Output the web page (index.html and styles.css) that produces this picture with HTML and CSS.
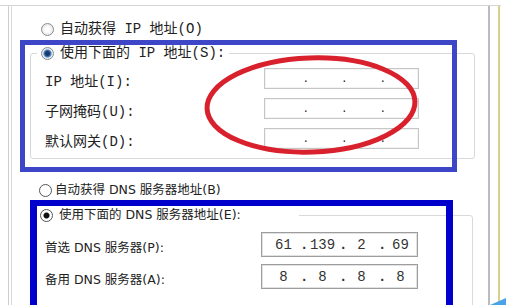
FILE: index.html
```html
<!DOCTYPE html>
<html lang="zh-CN">
<head>
    <meta charset="UTF-8">
    <title>Internet 协议版本 4 属性</title>
    <link rel="stylesheet" href="styles.css">
</head>
<body>
    <div class="shot">
        <div class="frame">
            <div class="dialog">
                <div class="xp">
                    <div class="opt opt-auto"><span class="radio"></span>自动获得 IP 地址(O)</div>
                    <fieldset class="group group-ip">
                        <legend class="opt"><span class="radio radio-xp"></span>使用下面的 IP 地址(S):</legend>
                        <div class="row">
                            <span class="lbl">IP 地址(I):</span>
                            <span class="ip"><span class="seg"></span><span class="dot">.</span><span class="seg"></span><span class="dot">.</span><span class="seg"></span><span class="dot">.</span><span class="seg"></span></span>
                        </div>
                        <div class="row">
                            <span class="lbl">子网掩码(U):</span>
                            <span class="ip"><span class="seg"></span><span class="dot">.</span><span class="seg"></span><span class="dot">.</span><span class="seg"></span><span class="dot">.</span><span class="seg"></span></span>
                        </div>
                        <div class="row">
                            <span class="lbl">默认网关(D):</span>
                            <span class="ip"><span class="seg"></span><span class="dot">.</span><span class="seg"></span><span class="dot">.</span><span class="seg"></span><span class="dot">.</span><span class="seg"></span></span>
                        </div>
                    </fieldset>
                </div>

                <div class="win7">
                    <div class="opt opt-dns"><span class="radio radio-flat"></span>自动获得 DNS 服务器地址(B)</div>
                    <fieldset class="group group-dns">
                        <legend class="opt"><span class="radio radio-flat radio-on"></span>使用下面的 DNS 服务器地址(E):</legend>
                        <div class="row">
                            <span class="lbl">首选 DNS 服务器(P):</span>
                            <span class="ip"><span class="seg">61</span><span class="dot">.</span><span class="seg">139</span><span class="dot">.</span><span class="seg">2</span><span class="dot">.</span><span class="seg">69</span></span>
                        </div>
                        <div class="row">
                            <span class="lbl">备用 DNS 服务器(A):</span>
                            <span class="ip"><span class="seg">8</span><span class="dot">.</span><span class="seg">8</span><span class="dot">.</span><span class="seg">8</span><span class="dot">.</span><span class="seg">8</span></span>
                        </div>
                    </fieldset>
                </div>
            </div>
            <div class="edge"></div>
        </div>

        <!-- annotations drawn over the dialog -->
        <div class="mark mark-ip"></div>
        <div class="mark mark-dns"></div>
        <svg class="ring" width="225" height="108" viewBox="0 0 225 108">
            <ellipse cx="111" cy="53" rx="104" ry="47" fill="none" stroke="#d8212c" stroke-width="5" transform="rotate(-2 111 53)"/>
        </svg>
        <div class="corner"></div>
    </div>
</body>
</html>
```

FILE: styles.css
```css
body {
    margin: 0;
    background: #fff;
}
.shot {
    position: relative;
    width: 506px;
    height: 305px;
    overflow: hidden;
    color: #222;
}
.frame {
    display: flex;
    margin-top: 5px;
    width: 501px;
    height: 300px;
    border-top: 1px solid #d5d5d5;
}
.dialog {
    margin-left: 8px;
    width: 482px;
    box-sizing: border-box;
    padding-top: 15px;
    border-left: 1px solid #cdcdcd;
    border-right: 2px solid #bbbbc3;
    box-shadow: inset 2px 0 #fff, inset 3px 0 #dadada;
}
.edge {
    margin-left: 8px;
    border-left: 2px solid #d8d088;
}

/* upper half: XP style dialog */
.xp {
    font-family: "Liberation Mono", "Noto Sans CJK SC", monospace;
    font-size: 14px;
}
/* lower half: Win7 style dialog */
.win7 {
    font-family: "DejaVu Sans", "Noto Sans CJK SC", sans-serif;
    font-size: 12.5px;
}

.opt {
    display: flex;
    align-items: center;
    gap: 6px;
    height: 16px;
    line-height: 16px;
    white-space: nowrap;
}
.opt-auto {
    padding-left: 32px;
}
.opt-dns {
    margin-top: 23px;
    padding-left: 30px;
    gap: 3px;
}

.radio {
    flex: none;
    width: 13px;
    height: 13px;
    box-sizing: border-box;
    border-radius: 50%;
    border: 1px solid #8c8c8c;
    background: radial-gradient(circle, #fff 30%, #d6d6d6);
}
.radio-xp {
    background: radial-gradient(circle, #1c3a66 0 2px, #4b88cf 3.5px, #dfe8f2 4.5px, #f2f2f2);
}
.radio-flat {
    border-color: #555;
    background: #fff;
}
.radio-on {
    background: radial-gradient(circle, #111 0 2.5px, #fff 3.5px);
}

.group {
    margin: 8px 0 0 21px;
    width: 445px;
    min-width: 0;
    box-sizing: border-box;
    padding: 0 0 9px;
    border: 1px solid #d9d9d9;
    border-radius: 3px;
}
.group legend {
    margin-left: 6px;
    padding: 0 4px;
}
.group-dns {
    margin-top: 9px;
    width: 443px;
    padding-bottom: 20px;
}
.group-dns legend {
    margin-left: 5px;
    padding-right: 58px;
}

.row {
    display: flex;
    align-items: center;
    height: 21px;
    margin-top: 9px;
}
.row:first-of-type {
    margin-top: 7px;
}
.lbl {
    width: 233px;
    box-sizing: border-box;
    padding-left: 14px;
    padding-top: 3px;
    white-space: nowrap;
}
.ip {
    display: flex;
    align-items: center;
    width: 155px;
    height: 21px;
    box-sizing: border-box;
    padding-left: 5px;
    border: 1px solid #c6c6c6;
    box-shadow: inset 0 0 0 1px #f3f3f3;
    background: #fff;
}
.seg {
    width: 33px;
    text-align: center;
}
.dot {
    width: 6px;
    text-align: center;
    font-size: 11px;
}

.group-dns .row {
    height: 25px;
    margin-top: 7px;
}
.group-dns .row:first-of-type {
    margin-top: 9px;
}
.group-dns .lbl {
    width: 230px;
}
.group-dns .ip {
    width: 157px;
    height: 25px;
    border-color: #9d9d9d;
    box-shadow: inset 0 0 0 1px #e2e2e2;
    font-family: "Liberation Mono", monospace;
    font-size: 14px;
    color: #333;
}
.group-dns .dot {
    font-size: 14px;
    font-weight: bold;
}

.mark {
    position: absolute;
    box-sizing: border-box;
}
.mark-ip {
    left: 20px;
    top: 40px;
    width: 437px;
    height: 132px;
    border: 5px solid #3d46c7;
}
.mark-dns {
    left: 30px;
    top: 200px;
    width: 423px;
    height: 120px;
    border: 6px solid #0000cd;
    border-left-width: 7px;
    border-right-width: 7px;
}
.ring {
    position: absolute;
    left: 200px;
    top: 52px;
}
.corner {
    position: absolute;
    right: 0;
    bottom: 0;
    width: 0;
    height: 0;
    border-left: 16px solid transparent;
    border-bottom: 7px solid #4aa3e6;
}
```
